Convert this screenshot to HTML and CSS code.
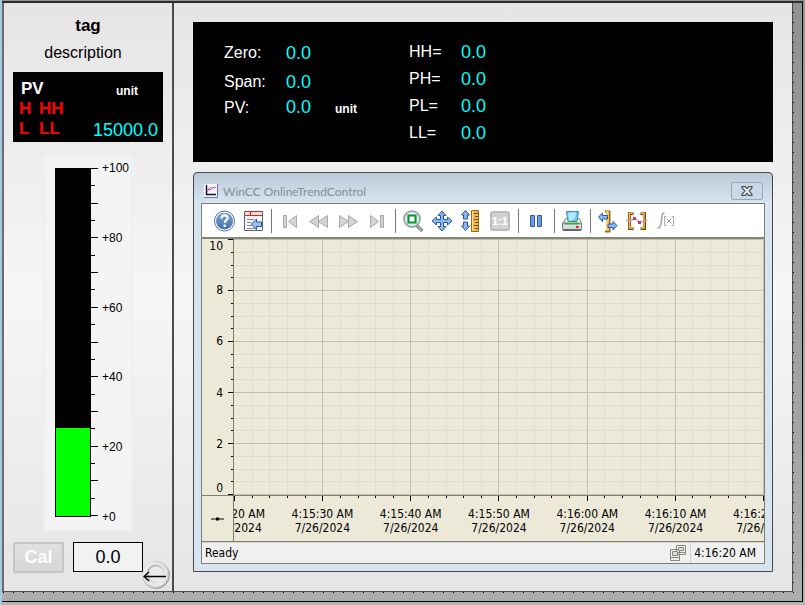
FILE: index.html
```html
<!DOCTYPE html>
<html lang="en">
<head>
<meta charset="utf-8">
<title>Faceplate</title>
<link rel="stylesheet" href="styles.css">
</head>
<body>
<div class="frame">
<div class="canvas">
  <aside class="sidebar">
    <h1 class="tag">tag</h1>
    <p class="description">description</p>
    <section class="status-box">
      <div class="status-row"><strong class="pv">PV</strong><span class="unit">unit</span></div>
      <div class="alarm-row"><span class="alarm">H</span><span class="alarm">HH</span></div>
      <div class="alarm-row"><span class="alarm">L</span><span class="alarm">LL</span><output class="value end">15000.0</output></div>
    </section>
    <section class="gauge">
      <div class="tank"><div class="level" style="height:25.4%"></div></div>
      <svg class="gauge-ticks" viewBox="0 0 7 350" aria-hidden="true"><path d="M0 .5h7M0 17.5h4M0 35.5h7M0 52.5h4M0 69.5h7M0 87.5h4M0 104.5h7M0 121.5h4M0 139.5h7M0 156.5h4M0 174.5h7M0 191.5h4M0 208.5h7M0 226.5h4M0 243.5h7M0 260.5h4M0 278.5h7M0 295.5h4M0 312.5h7M0 330.5h4M0 347.5h7"/></svg>
      <div class="gauge-labels"><span>+100</span><span>+80</span><span>+60</span><span>+40</span><span>+20</span><span>+0</span></div>
    </section>
    <div class="controls">
      <button class="cal" disabled>Cal</button>
      <input class="entry" type="text" value="0.0" aria-label="Setpoint">
      <button class="back" aria-label="Back">
        <svg viewBox="0 0 28 28" aria-hidden="true">
          <defs><linearGradient id="ring" x2="1" y2="1"><stop offset="0" stop-color="#fff"/><stop offset="1" stop-color="#b8b8b8"/></linearGradient><linearGradient id="ring2" x2="1" y2="1"><stop offset="0" stop-color="#aaa"/><stop offset="1" stop-color="#f6f6f6"/></linearGradient><linearGradient id="edge" x2="1" y2="1"><stop offset="0" stop-color="#ddd"/><stop offset="1" stop-color="#777"/></linearGradient></defs>
          <circle cx="14" cy="14" r="13.5" fill="url(#ring)" stroke="url(#edge)" stroke-width=".8"/>
          <circle cx="14" cy="14" r="11.5" fill="#e8e8e8"/>
          <circle cx="14" cy="13" r="8.5" fill="#eaeaea" stroke="url(#ring2)" stroke-width="2"/>
          <path d="M2 15.5H24M7 11 2 15.5 7 20" fill="none" stroke="#000" stroke-width="1.3"/>
        </svg>
      </button>
    </div>
  </aside>

  <main class="main">
    <section class="readouts">
      <dl class="readout-group left">
        <dt>Zero:</dt><dd>0.0</dd>
        <dt>Span:</dt><dd>0.0</dd>
        <dt>PV:</dt><dd>0.0 <span class="unit">unit</span></dd>
      </dl>
      <dl class="readout-group right">
        <dt>HH=</dt><dd>0.0</dd>
        <dt>PH=</dt><dd>0.0</dd>
        <dt>PL=</dt><dd>0.0</dd>
        <dt>LL=</dt><dd>0.0</dd>
      </dl>
    </section>

    <section class="window">
      <header class="titlebar">
        <svg class="title-icon" viewBox="0 0 14 14" aria-hidden="true"><path d="M0 0h14v14H0z" fill="#f7f7ff"/><path d="M13.5 0v13.5H0" fill="none" stroke="#6a70c8"/><path d="M2.5 1v9.5H12" fill="none" stroke="#111" stroke-width="1.4"/><path d="M3 8l2-3 2 1 2-3 1 1 2-1M3 5h2l2-2" fill="none" stroke="#c050d8"/></svg>
        <h2 class="title">WinCC OnlineTrendControl</h2>
        <button class="close" aria-label="Close"><svg viewBox="0 0 12 10" aria-hidden="true"><path d="M1 .7h3.3L6 2.7 7.7 .7H11v1L8 5l3 3.300v1H7.700L6 7.300l-1.700 2H1v-1L4 5 1 1.700z" fill="#f4f7fb" stroke="#4a525e" stroke-width="1.2"/></svg></button>
      </header>

      <div class="trend">
        <nav class="toolbar">
          <button class="tool" aria-label="Help"><svg viewBox="0 0 24 24"><defs><linearGradient id="hb" x2="0" y2="1"><stop offset="0" stop-color="#86a9d3"/><stop offset="1" stop-color="#3e6caa"/></linearGradient></defs><circle cx="12.500" cy="12" r="10" fill="#fff" stroke="#5d6f88"/><circle cx="12.500" cy="12" r="8.500" fill="url(#hb)"/><path d="M9.500 9.500c0-4 6.200-4 6.200-.500 0 2.200-3 2.200-3 4.800" fill="none" stroke="#fff" stroke-width="2.200"/><circle cx="12.700" cy="16.800" r="1.400" fill="#fff"/></svg></button>
          <button class="tool" aria-label="Configuration"><svg viewBox="0 0 24 24"><path d="M3.500 2.500h18v19h-18z" fill="#f5f5f5" stroke="#5a6680"/><path d="M4 2h17v5H4z" fill="#fbdada"/><path d="M4 2.500h17M4 6.500h17M9.500 2v4" fill="none" stroke="#e22020" stroke-width="1.200"/><path d="M6 10.500h7M6 13.500h4M6 16.500h5M6 19.500h8" stroke="#888"/><path d="m10.500 15 5-5v3h5v4.500h-5v3z" fill="#94c3f3" stroke="#244fa4"/></svg></button>
          <span class="sep"></span>
          <button class="tool dim" aria-label="First record" disabled><svg viewBox="0 0 24 24"><path d="M5.500 6.500h3v12h-3zM18.500 6.500v12l-8-6z"/></svg></button>
          <button class="tool dim" aria-label="Previous record" disabled><svg viewBox="0 0 24 24"><path d="M11.500 6.500v12l-9-6zM20.500 6.500v12l-9-6z"/></svg></button>
          <button class="tool dim" aria-label="Next record" disabled><svg viewBox="0 0 24 24"><path d="M3.500 6.500v12l9-6zM12.500 6.500v12l9-6z"/></svg></button>
          <button class="tool dim" aria-label="Last record" disabled><svg viewBox="0 0 24 24"><path d="M5.500 6.500v12l8-6zM15.500 6.500h3v12h-3z"/></svg></button>
          <span class="sep"></span>
          <button class="tool" aria-label="Zoom area"><svg viewBox="0 0 24 24"><path d="m15 16 6.500 6" stroke="#888" stroke-width="3.200"/><path d="m16 16.500 5 4.700" stroke="#ccc" stroke-width="1"/><circle cx="11" cy="10" r="8" fill="#d9eaf6" stroke="#8d979c" stroke-width="1.500"/><path d="M7.500 6.500h7v7h-7z" fill="#fff" stroke="#0a9a25" stroke-width="2.200"/></svg></button>
          <button class="tool" aria-label="Move trend"><svg viewBox="0 0 24 24"><path class="blue" d="m12 2 4 4.500h-2.500v4h4V8l4.500 4-4.500 4v-2.500h-4v4H16L12 22l-4-4.500h2.500v-4h-4V16L2 12l4.500-4v2.500h4v-4H8z"/></svg></button>
          <button class="tool" aria-label="Zoom axis"><svg viewBox="0 0 24 24"><path class="blue" d="m6.500 1.500 4 4.500H8.500v4h-4V6h-2zM4.500 13h4v4h2l-4 4.500-4-4.500h2z"/><path d="M12.500 1.500h7v21h-7z" fill="#f3b74a" stroke="#9b6818"/><path d="M13.500 2v20" stroke="#ffe08a"/><path d="M19 4.500h-4M19 7.500h-3M19 10.500h-4M19 13.500h-3M19 16.500h-4M19 19.500h-3" stroke="#714911"/></svg></button>
          <button class="tool one" aria-label="Original view" disabled><span class="ratio">1:1</span></button>
          <span class="sep"></span>
          <button class="tool" aria-label="Pause"><svg viewBox="0 0 24 24"><path d="M6.500 6.500h4v11h-4zM13.500 6.500h4v11h-4z" fill="#6b9be0" stroke="#2f58a8"/></svg></button>
          <span class="sep"></span>
          <button class="tool" aria-label="Print"><svg viewBox="0 0 24 24"><rect x="2.500" y="12.500" width="19" height="9" rx="2" fill="#d9dce2" stroke="#6e7785"/><path d="M5.500 9.500h14l2 5h-18z" fill="#f0f2f5" stroke="#848c98"/><path d="M6.500 2.500h12l-1.500 10H8z" fill="#62c4f2" stroke="#4a8cab"/><path d="M8 4l8-1-1 7-6 2z" fill="#b4e8ff"/><path d="M4.500 14.500h15" stroke="#44a52c" stroke-width="2"/><path d="M3 21h18" stroke="#606876" stroke-width="2"/><path d="M16 17h2.500v2H16z" fill="#e31919"/></svg></button>
          <span class="sep"></span>
          <button class="tool" aria-label="Select time range"><svg viewBox="0 0 24 24"><path d="M9 2.500h4.500v20H9" fill="none" stroke="#9b6818" stroke-width="2"/><path d="M11.500 2v20" stroke="#f5c45e" stroke-width="2.500"/><path class="blue" d="m2.500 8 4-4v2.500h5v3.500h-5v2.500zM21 16.500l-4-4V15h-5v3.500h5V21z"/></svg></button>
          <button class="tool" aria-label="Define statistics area"><svg viewBox="0 0 24 24"><path d="M8.500 4.500h-4v15h4M15.500 4.500h4v15h-4" fill="none" stroke="#6f430d" stroke-width="3"/><path d="M8 4H4.500v15H8M15.500 4H19v15h-3.500" fill="none" stroke="#f4c05a" stroke-width="1.500"/><path d="M1 11.500h5l4-2 4.500 4 5-2h3" fill="none" stroke="#dc91ac" stroke-width="1.300"/><path d="M8 8h3v3H8zM13 12h3v3h-3z" fill="#b23c6d"/></svg></button>
          <button class="tool" aria-label="Calculate statistics" disabled><svg viewBox="0 0 24 24"><path d="M10.500 4.500C8 3.500 8 6 7.500 11S6 20 3.500 18.500" fill="none" stroke="#aaa" stroke-width="1.700"/><path d="M12.500 7.500h-2v9h2M17.500 7.500h2v9h-2M12.500 9.500l5 5m0-5-5 5" fill="none" stroke="#aaa"/></svg></button>
        </nav>

        <div class="chart">
          <div class="y-axis">
            <div class="y-labels"><span>10</span><span>8</span><span>6</span><span>4</span><span>2</span><span>0</span></div>
            <svg class="y-ticks" viewBox="0 0 5 256" preserveAspectRatio="none" aria-hidden="true"><path d="M0 .5h5M0 51.500h5M0 102.500h5M0 153.500h5M0 204.500h5M0 255.500h5M3 13.500h2M3 26.500h2M3 38.500h2M3 64.500h2M3 77.500h2M3 89.500h2M3 115.500h2M3 128.500h2M3 140.500h2M3 166.500h2M3 179.500h2M3 191.500h2M3 217.500h2M3 230.500h2M3 242.500h2"/></svg>
          </div>
          <svg class="plot" viewBox="0 0 530 256" preserveAspectRatio="none" role="img" aria-label="Empty trend plot">
            <path class="minor" d="M18.500 0v256M35.500 0v256M53.500 0v256M71.500 0v256M106.500 0v256M124.500 0v256M141.500 0v256M159.500 0v256M194.500 0v256M212.500 0v256M229.500 0v256M247.500 0v256M282.500 0v256M300.500 0v256M317.500 0v256M335.500 0v256M370.500 0v256M388.500 0v256M406.500 0v256M423.500 0v256M458.500 0v256M476.500 0v256M494.500 0v256M511.500 0v256M0 13.500h530M0 26.500h530M0 38.500h530M0 64.500h530M0 77.500h530M0 89.500h530M0 115.500h530M0 128.500h530M0 140.500h530M0 166.500h530M0 179.500h530M0 191.500h530M0 217.500h530M0 230.500h530M0 242.500h530"/>
            <path class="major" d="M88.500 0v256M176.500 0v256M264.500 0v256M353.500 0v256M441.500 0v256M529.500 0v256M0 .5h530M0 51.500h530M0 102.500h530M0 153.500h530M0 204.500h530M0 255.500h530"/>
          </svg>
          <div class="legend"><svg viewBox="0 0 13 4" aria-hidden="true"><path d="M0 2h13" stroke="#777768" stroke-width="2"/><path d="M5 .5h3v3H5z"/></svg></div>
          <div class="x-axis">
            <svg class="x-ticks" viewBox="0 0 530 5" preserveAspectRatio="none" aria-hidden="true"><path d="M.5 0v5M88.500 0v5M176.500 0v5M264.500 0v5M353.500 0v5M441.500 0v5M529.500 0v5M18.500 0v2M35.500 0v2M53.500 0v2M71.500 0v2M106.500 0v2M124.500 0v2M141.500 0v2M159.500 0v2M194.500 0v2M212.500 0v2M229.500 0v2M247.500 0v2M282.500 0v2M300.500 0v2M317.500 0v2M335.500 0v2M370.500 0v2M388.500 0v2M406.500 0v2M423.500 0v2M458.500 0v2M476.500 0v2M494.500 0v2M511.500 0v2"/></svg>
            <div class="x-labels">
              <span>4:15:20 AM<br>7/26/2024</span><span>4:15:30 AM<br>7/26/2024</span><span>4:15:40 AM<br>7/26/2024</span><span>4:15:50 AM<br>7/26/2024</span><span>4:16:00 AM<br>7/26/2024</span><span>4:16:10 AM<br>7/26/2024</span><span>4:16:20 AM<br>7/26/2024</span>
            </div>
          </div>
        </div>

        <footer class="statusbar">
          <span>Ready</span>
          <svg class="net" viewBox="0 0 16 16" aria-hidden="true"><path d="M6.500.5h9v7h-9zM8 9.500h7.500v-2M.5 4.500h9v8h-9zM.5 12.500h9v3h-9z" fill="#eee" stroke="#888880"/><path d="M8.500 2.500h5v3h-5zM2.500 6.500h5v4h-5z" fill="#ddd" stroke="#888880"/></svg>
          <time class="clock">4:16:20 AM</time>
        </footer>
      </div>
    </section>
  </main>
</div>
</div>
</body>
</html>
```
FILE: styles.css
```css
* { box-sizing: border-box; }

body {
  margin: 0;
  min-height: 100vh;
  padding: 1px 2px 3px 0;
  border-left: 2px solid #a3cbe6;
  display: flex;
  background: linear-gradient(#929292, #b4b4b4);
  font-family: "Liberation Sans", Arial, sans-serif;
  font-size: 16px;
  color: #000;
}

h1, h2, p, dl, dd { margin: 0; }
button { padding: 0; font-family: inherit; }
svg { display: block; }

/* Outer frame with ruler dots along the right and bottom edges */
.frame {
  flex: 1;
  display: flex;
  padding: 0 9px 9px 0;
  border-top: 2px solid #2c2c2c;
  border-right: 1px solid #000;
  border-bottom: 1px solid #000;
  background:
    repeating-linear-gradient(90deg, transparent 0 1px, #000 1px 2px, transparent 2px 10px) 0 calc(100% - 8px) / 100% 1px no-repeat,
    repeating-linear-gradient(transparent 0 9px, #000 9px 10px) calc(100% - 8px) 0 / 1px 100% no-repeat,
    linear-gradient(#929292, #acacac);
}

.canvas {
  flex: 1;
  min-width: 0;
  display: flex;
  border: solid #4a4a4a;
  border-width: 0 1px 1px 2px;
  border-left-color: #6c6c6c;
  background: linear-gradient(#e5e5e5, #f6f6f6 50%, #e5e5e5);
}

/* Sidebar */
.sidebar {
  flex: none;
  width: 170px;
  padding: 12px 9px 0;
  border-right: 2px solid #4c4c4c;
}

.tag { font-size: 17px; line-height: 22px; text-align: center; }
.description { padding: 5px 10px 0 0; line-height: 22px; text-align: center; }

.status-box {
  margin-top: 8px;
  height: 70px;
  padding: 7px 5px 0 6px;
  background: #000;
  font-size: 17px;
}
.status-row, .alarm-row { display: flex; align-items: center; height: 20px; }
.status-row { justify-content: space-between; padding: 0 20px 0 2px; }
.pv { color: #fff; }
.unit { color: #fff; font-size: 12px; font-weight: bold; }
.status-row .unit { padding-top: 4px; }
.alarm { color: #f00; font-weight: bold; width: 20px; }
.value { color: #0ff; font-size: 18px; padding-top: 3px; }
.end { margin-left: auto; }

.gauge {
  display: flex;
  width: 90px;
  margin: 12px 0 0 30px;
  padding: 4px 0 4px 9px;
  border: 3px solid #f0f0f0;
  background: #f4f4f4;
}
.tank {
  display: flex;
  align-items: flex-end;
  width: 36px;
  height: 349px;
  margin: 7px 0;
  border: 1px solid #000;
  background: #000;
}
.level { width: 100%; background: #0f0; }
.gauge-ticks { width: 7px; height: 350px; margin-top: 7px; stroke: #000; shape-rendering: crispEdges; }
.gauge-labels {
  display: flex;
  flex-direction: column;
  justify-content: space-between;
  margin-left: 4px;
  font-size: 12px;
  line-height: 14px;
}

.controls { position: relative; display: flex; gap: 9px; margin-top: 11px; }
.cal {
  width: 51px;
  height: 31px;
  border: 2px solid #c6c6c6;
  border-radius: 2px;
  background: linear-gradient(#e0e0e0, #d6d6d6);
  color: #fff;
  font-size: 18px;
  font-weight: bold;
}
.entry {
  width: 70px;
  height: 30px;
  border: 1px solid #000;
  padding: 0;
  background: #f2f2f2;
  font: 18px "Liberation Sans", Arial, sans-serif;
  text-align: center;
}
.back {
  position: absolute;
  right: -7px;
  bottom: -16px;
  width: 28px;
  height: 28px;
  border: 0;
  background: none;
}

/* Main area */
.main { flex: 1; min-width: 0; padding: 19px 19px 0; }

.readouts {
  display: flex;
  gap: 52px;
  height: 140px;
  padding: 16px 31px;
  background: #000;
  color: #fff;
}
.readout-group { display: grid; line-height: 30px; align-items: center; }
.left { grid-template: 30px 28px 24px / 62px auto; align-content: start; }
.right { grid-template: 28px 26px 28px 26px / 52px auto; align-content: start; }
.readouts dd { color: #0ff; font-size: 18px; }
.readouts dd .unit { margin-left: 19px; }

/* Trend window */
.window {
  margin-top: 10px;
  padding: 0 7px 7px;
  border: 1px solid #48484c;
  border-radius: 4px 4px 0 0;
  background: linear-gradient(#bccbd9, #d7e4f1 30px);
}
.titlebar { display: flex; align-items: center; height: 30px; padding: 7px 2px 1px 3px; }
.title-icon { width: 14px; height: 14px; }
.title {
  flex: 1;
  margin-left: 5px;
  font: 12px Lato, "Open Sans", sans-serif;
  color: #868d94;
}
.close {
  display: grid;
  place-items: center;
  width: 32px;
  height: 18px;
  border: 1px solid #9aa8ba;
  border-radius: 2px;
  background: #cbd9e7;
}
.close svg { width: 12px; height: 10px; }

.trend {
  border: 1px solid #7f7f70;
  background: #ece9d8;
  font: 12px/14px "DejaVu Sans Condensed", "Noto Sans", sans-serif;
}

.toolbar {
  display: flex;
  align-items: center;
  gap: 5px;
  height: 35px;
  padding-left: 10px;
  border-bottom: 2px solid #85857a;
  background: #fff;
}
.tool { width: 24px; height: 24px; border: 0; background: none; }
.sep { width: 1px; height: 24px; margin: 0 1px; background: #777; }
.sep ~ .sep { margin: 0 0 0 1px; }
.dim svg { fill: #d4d4d4; stroke: #a8a8a8; }
.blue { fill: #8cb8f0; stroke: #2b55a0; }
.one { display: grid; place-items: center; }
.ratio {
  width: 20px;
  height: 20px;
  border: 2px solid #bcbcbc;
  border-radius: 3px;
  background: #d2d2d2;
  color: #fff;
  font: bold 11px/16px "Liberation Sans", Arial, sans-serif;
  text-align: center;
}

.chart { display: grid; grid-template-columns: 32px minmax(0, 1fr); grid-template-rows: 256px 47px; }
.y-axis { display: flex; border-right: 1px solid #7f7f70; }
.y-labels {
  flex: 1;
  display: grid;
  grid-template-rows: 1fr 2fr 2fr 2fr 2fr 1fr;
  align-items: center;
  padding-right: 5px;
  text-align: right;
}
.y-labels span:first-child { align-self: start; }
.y-labels span:last-child { align-self: end; }
.y-ticks { width: 5px; height: 256px; stroke: #000; shape-rendering: crispEdges; }
.plot { width: 100%; height: 256px; fill: none; shape-rendering: crispEdges; }
.minor { stroke: #e0ddcd; }
.major { stroke: #c2bfb0; }

.legend {
  display: grid;
  place-items: center;
  border: solid #7f7f70;
  border-width: 1px 1px 1px 0;
}
.legend svg { width: 13px; height: 4px; }
.x-axis { overflow: hidden; border: solid #7f7f70; border-width: 1px 0; }
.x-ticks { width: 100%; height: 5px; stroke: #000; shape-rendering: crispEdges; }
.x-labels {
  display: grid;
  grid-template-columns: repeat(7, minmax(0, 1fr));
  margin: 6px -44px 0;
  text-align: center;
  white-space: nowrap;
}

.statusbar {
  display: flex;
  align-items: center;
  height: 21px;
  padding: 0 0 0 3px;
  border-top: 1px solid #d4d4d0;
  background: #f0f0f0;
}
.net { width: 16px; height: 16px; margin-left: auto; }
.clock { margin-left: 4px; padding: 3px 8px 3px 3px; border-left: 1px solid #d0d0d0; }
```
